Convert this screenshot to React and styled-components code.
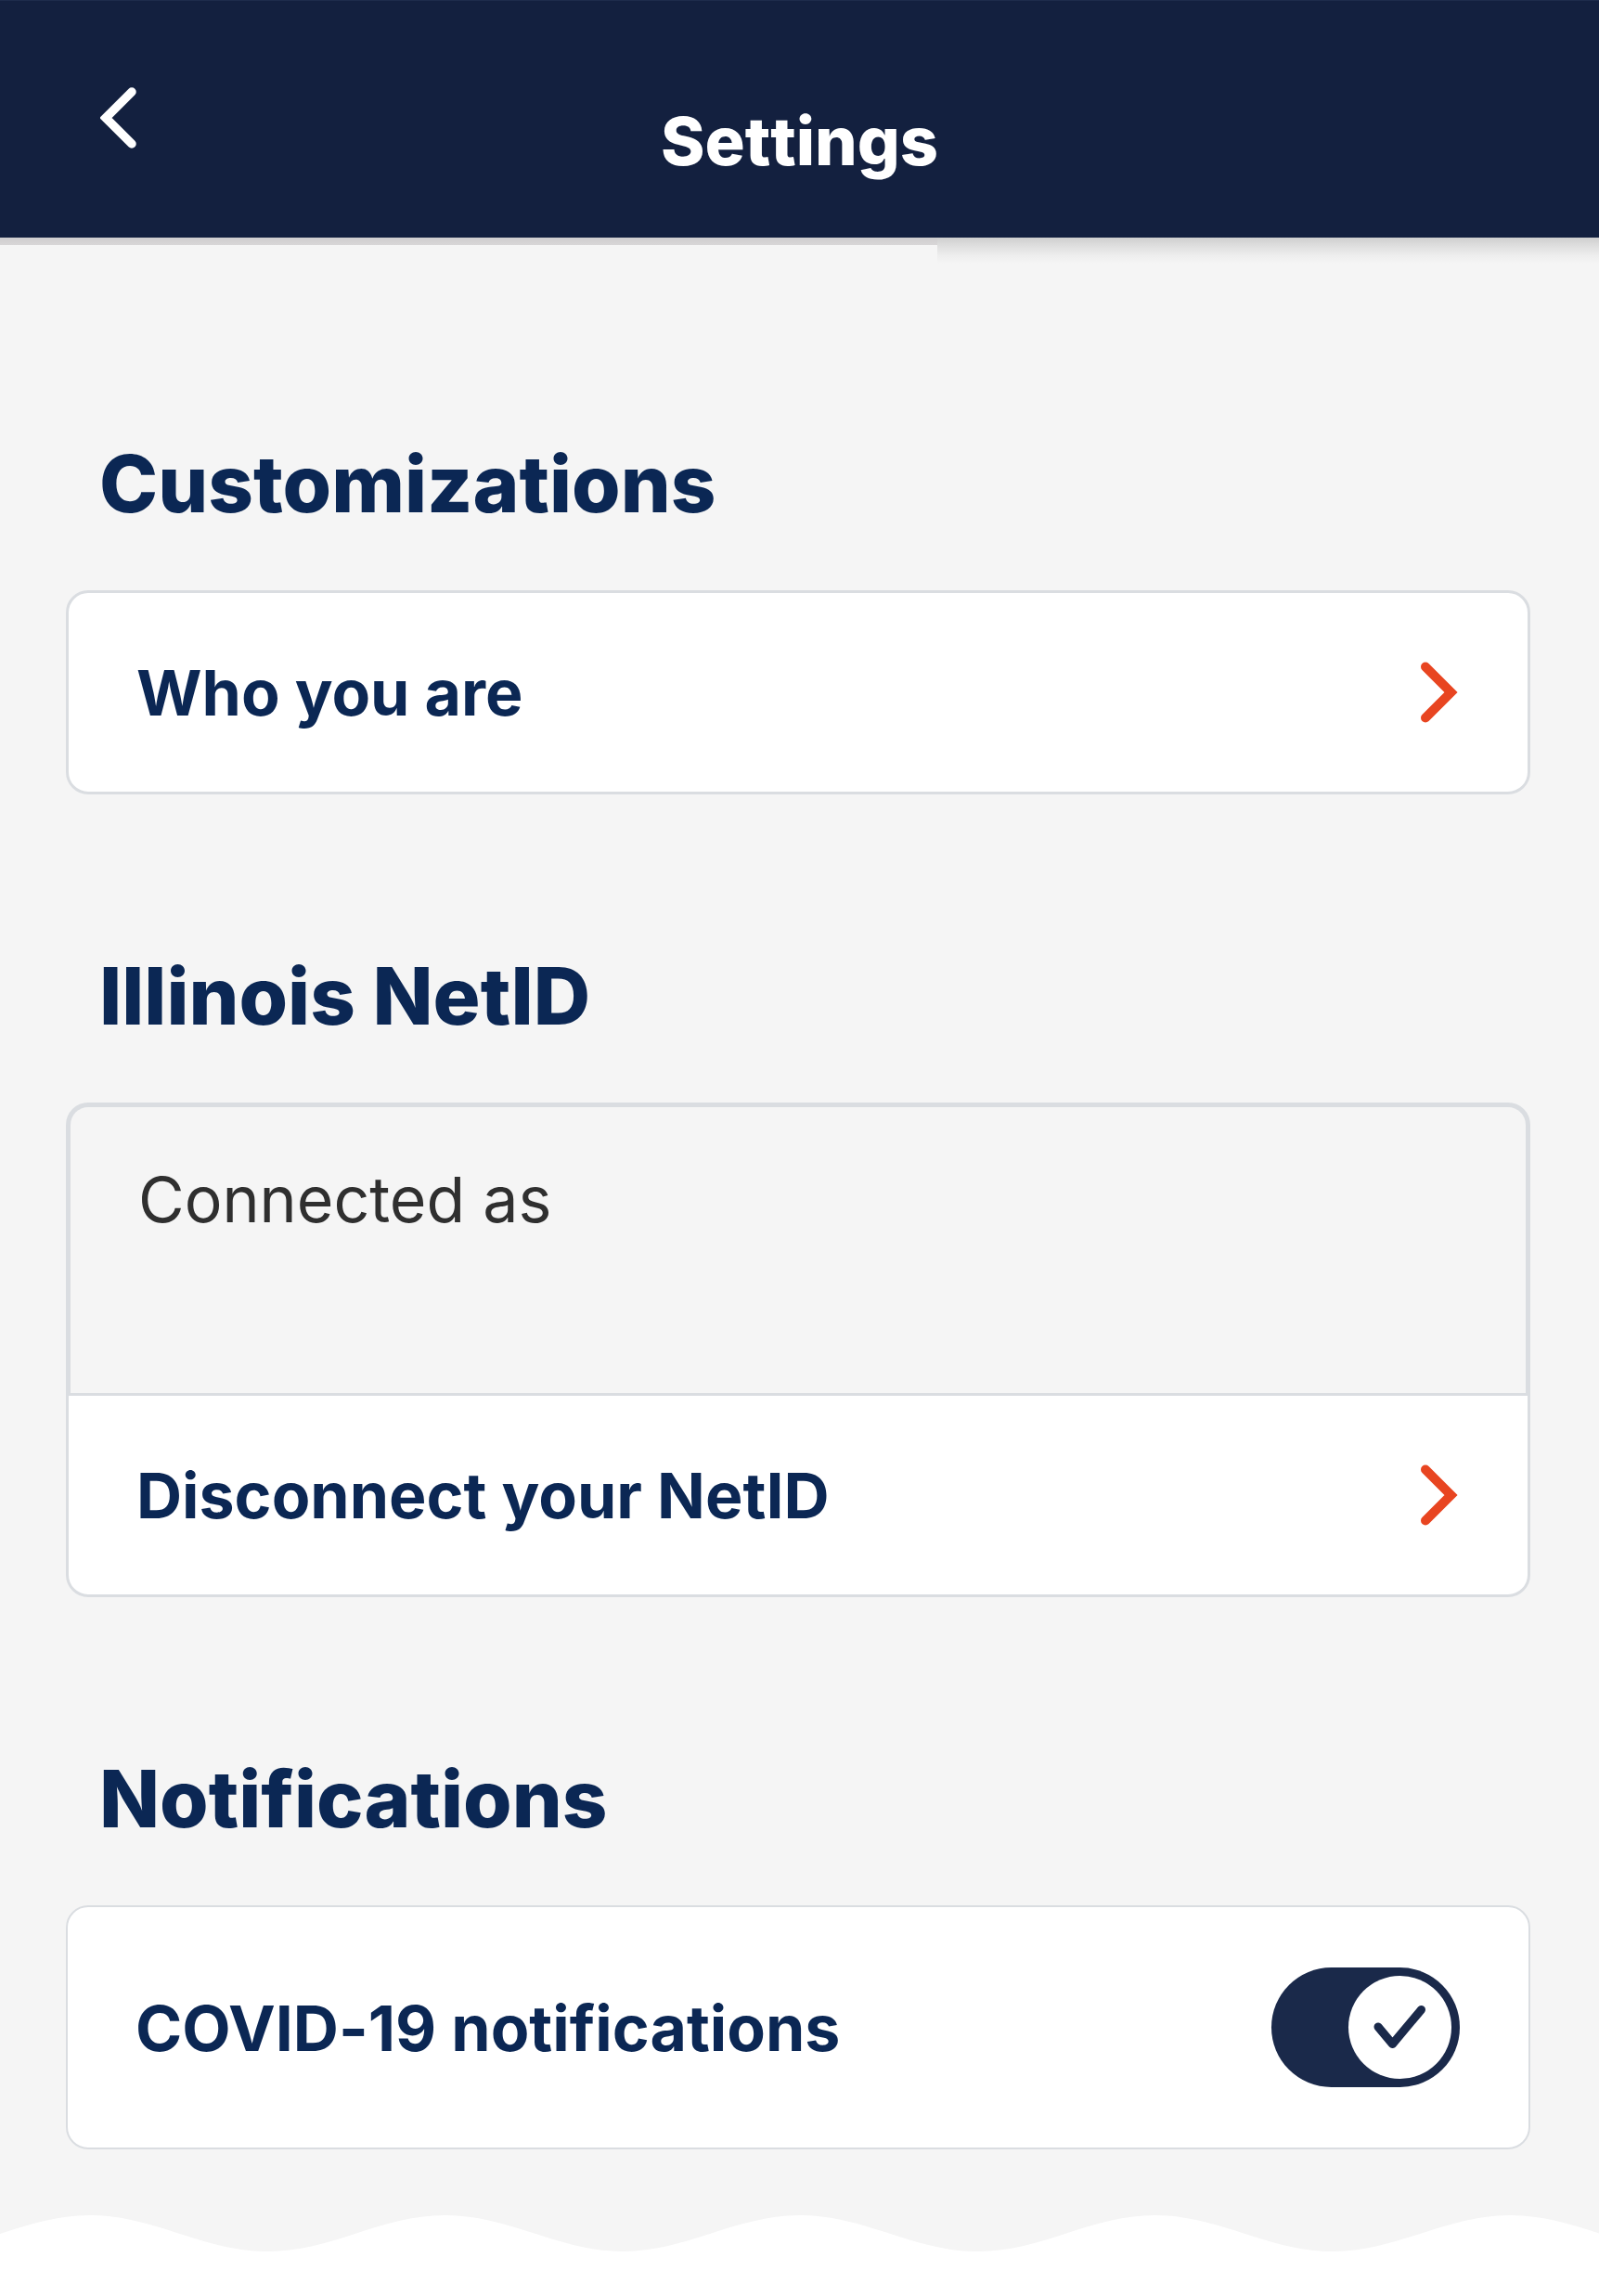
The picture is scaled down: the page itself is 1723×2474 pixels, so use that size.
import React, { useState } from "react";
import styled, { createGlobalStyle, css } from "styled-components";

const color = {
  page: "#f5f5f5",
  header: "#13203f",
  navy: "#0b2754",
  toggle: "#1a294a",
  orange: "#e84521",
  border: "#dadde1",
  text: "#2f2f2f",
};

const GlobalStyle = createGlobalStyle`
  *, *::before, *::after { box-sizing: border-box; }
  body {
    margin: 0;
    background: #fff;
    font-family: Inter, "Liberation Sans", sans-serif;
    font-variant-ligatures: none;
  }
`;

const Header = styled.header`
  display: grid;
  grid-template-columns: 1fr auto 1fr;
  align-items: start;
  height: 256px;
  padding: 93px 108px 0;
  border-top: 1px solid #1d2b4b;
  background: ${color.header};
`;

const BackButton = styled.button`
  justify-self: start;
  padding: 0;
  border: 0;
  background: none;
  cursor: pointer;

  svg {
    display: block;
  }
`;

const Title = styled.h1`
  margin: 0;
  padding-top: 16px;
  color: #fff;
  font-size: 72px;
  font-weight: 800;
  font-kerning: none;
  line-height: 84px;
`;

const HeaderShadow = styled.div`
  display: grid;
  grid-template-columns: 1010fr 713fr;
  height: 28px;
  background: ${color.page};
`;

const FlatShadow = styled.div`
  height: 8px;
  background: linear-gradient(#cfcecf, #d8d6d7);
`;

const SoftShadow = styled.div`
  background: linear-gradient(#cfcfcf, #e0e0e0 35%, #eeeeee 70%, ${color.page});
`;

const Content = styled.main`
  display: flex;
  flex-direction: column;
  gap: 168px;
  padding: 188px 74px 71px 71px;
  background: ${color.page};
`;

const Section = styled.section`
  display: flex;
  flex-direction: column;
  gap: 64px;
`;

const SectionTitle = styled.h2`
  margin: 0;
  padding-left: 36px;
  color: ${color.navy};
  font-size: 85px;
  font-weight: 800;
  line-height: 100px;
`;

const Group = styled.div`
  display: flex;
  flex-direction: column;
`;

const row = css`
  display: flex;
  align-items: center;
  justify-content: space-between;
  width: 100%;
  border: 3px solid ${color.border};
  background: #fff;
  color: ${color.navy};
  font-family: inherit;
  font-size: 68px;
  font-weight: 700;
  line-height: 84px;
  text-align: left;
  cursor: pointer;
`;

const RowButton = styled.button`
  ${row}
  padding: 65px 75px 65px 73px;
  border-radius: ${(p) => (p.$last ? "0 0 24px 24px" : "24px")};
`;

const ToggleRow = styled.label`
  ${row}
  padding: 65px 74px 65px 73px;
  border-width: 2px;
  border-radius: 24px;
`;

const Status = styled.p`
  margin: 0;
  padding: 57px 73px 167px;
  border: 5px solid ${color.border};
  border-bottom: 0;
  border-radius: 24px 24px 0 0;
  color: ${color.text};
  font-size: 68px;
  line-height: 84px;
`;

const Switch = styled.span`
  display: grid;
  flex: none;
  width: 203px;
  height: 129px;

  > * {
    grid-area: 1 / 1;
  }
`;

const SwitchInput = styled.input`
  appearance: none;
  width: 100%;
  height: 100%;
  margin: 0;
  border-radius: 65px;
  background: ${color.toggle};
  cursor: pointer;

  &:not(:checked) {
    background: #9aa1b0;
  }
`;

const Knob = styled.span`
  display: grid;
  place-items: center;
  align-self: center;
  justify-self: ${(p) => (p.$on ? "end" : "start")};
  width: 111px;
  height: 111px;
  margin: 0 9px;
  border-radius: 50%;
  background: #fff;
  pointer-events: none;
`;

const Wave = styled.svg`
  display: block;
  width: 100%;
  height: 39px;
  background: ${color.page};
`;

const Footer = styled.footer`
  height: 49px;
  background: #fff;
`;

function BackIcon() {
  return (
    <svg width="40" height="66" viewBox="0 0 40 66" aria-hidden="true">
      <path d="M34 5 6 33l28 28" fill="none" stroke="#fff" strokeWidth="9.5" strokeLinecap="round" />
    </svg>
  );
}

function ForwardIcon() {
  return (
    <svg width="40" height="66" viewBox="0 0 40 66" aria-hidden="true">
      <path d="M5 5.5 32.500 33 5 60.500" fill="none" stroke={color.orange} strokeWidth="10" strokeLinecap="round" />
    </svg>
  );
}

function CheckIcon() {
  return (
    <svg width="111" height="111" viewBox="0 0 111 111" aria-hidden="true">
      <path
        d="M32 55 47.500 73.500 78.500 36.500"
        fill="none"
        stroke={color.toggle}
        strokeWidth="9"
        strokeLinecap="round"
        strokeLinejoin="round"
      />
    </svg>
  );
}

function wavePath(firstCrest, half, depth, width) {
  const k = half * 0.364;
  let x = firstCrest - half;
  let low = true;
  let d = `M${x} ${depth}`;
  while (x < width) {
    const y0 = low ? depth : 0;
    const y1 = low ? 0 : depth;
    d += ` C${x + k} ${y0} ${x + half - k} ${y1} ${x + half} ${y1}`;
    x += half;
    low = !low;
  }
  return `${d} V${depth + 2} H${firstCrest - half} Z`;
}

export default function App() {
  const [covid, setCovid] = useState(true);

  return (
    <>
      <GlobalStyle />
      <Header>
        <BackButton type="button" aria-label="Back">
          <BackIcon />
        </BackButton>
        <Title>Settings</Title>
      </Header>
      <HeaderShadow>
        <FlatShadow />
        <SoftShadow />
      </HeaderShadow>
      <Content>
        <Section>
          <SectionTitle>Customizations</SectionTitle>
          <Group>
            <RowButton type="button">
              Who you are
              <ForwardIcon />
            </RowButton>
          </Group>
        </Section>
        <Section>
          <SectionTitle>Illinois NetID</SectionTitle>
          <Group>
            <Status>Connected as</Status>
            <RowButton type="button" $last>
              Disconnect your NetID
              <ForwardIcon />
            </RowButton>
          </Group>
        </Section>
        <Section>
          <SectionTitle>Notifications</SectionTitle>
          <Group>
            <ToggleRow htmlFor="covid">
              COVID-19 notifications
              <Switch>
                <SwitchInput
                  id="covid"
                  type="checkbox"
                  role="switch"
                  checked={covid}
                  onChange={(e) => setCovid(e.target.checked)}
                />
                <Knob $on={covid}>{covid && <CheckIcon />}</Knob>
              </Switch>
            </ToggleRow>
          </Group>
        </Section>
      </Content>
      <Wave viewBox="0 0 1723 39" preserveAspectRatio="none" aria-hidden="true">
        <path d={wavePath(97, 191.3, 39, 1723)} fill="#fff" />
      </Wave>
      <Footer />
    </>
  );
}
